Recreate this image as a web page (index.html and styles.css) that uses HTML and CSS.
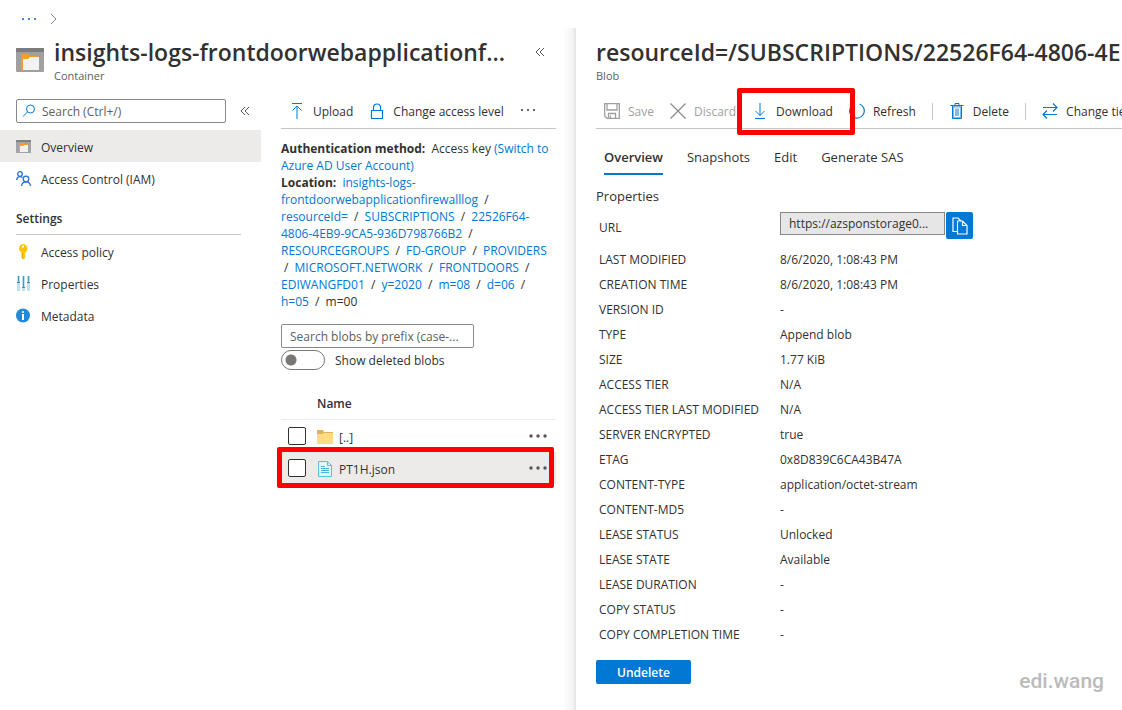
FILE: index.html
```html
<!DOCTYPE html>
<html lang="en">
<head>
  <meta charset="UTF-8" />
  <meta name="viewport" content="width=device-width, initial-scale=1" />
  <title>Storage container</title>
  <link rel="stylesheet" href="styles.css">
</head>
<body>

  <nav class="breadcrumb" aria-label="Breadcrumb">
    <button type="button" class="crumb-more" aria-label="More">
      <svg width="14" height="3" viewBox="0 0 14 3" fill="#3d8edb"><path d="M0 0h2v2H0zM6 0h2v2H6zM12 0h2v2h-2z"/></svg>
    </button>
    <svg width="8" height="12" viewBox="0 0 8 12" fill="none" stroke="#8a8886"><path d="M1 1l5 5-5 5"/></svg>
  </nav>

  <div class="blades">
    <section class="blade container-blade">
      <header class="blade-header">
        <svg class="blade-icon" viewBox="0 0 28 26">
          <rect y="1" width="28" height="24" rx="1" fill="#a0a0a0"/>
          <path d="M0 5V2q0-1 1-1h26q1 0 1 1v3z" fill="#7c7c7c"/>
          <path d="M5 8q0-1 1-1h6l2 2h7q1 0 1 1v13H6q-1 0-1-1z" fill="#ff9b2b"/>
          <path d="M7 23V12h5l2-2h9v13z" fill="#f2f2f2"/>
        </svg>
        <div class="blade-title">
          <h1>insights-logs-frontdoorwebapplicationf...</h1>
          <p>Container</p>
        </div>
        <button type="button" class="collapse" aria-label="Collapse">
          <svg width="10" height="10" viewBox="0 0 10 10" fill="none" stroke="#555"><path d="M5 1L1 5l4 4M9 1L5 5l4 4"/></svg>
        </button>
      </header>

      <div class="blade-body">
        <nav class="menu">
          <div class="menu-search">
            <div class="search-box">
              <svg width="14" height="14" viewBox="0 0 14 14" fill="none" stroke="#0078d4"><circle cx="8.5" cy="5" r="4"/><path d="M5.500 8L1 12.500"/></svg>
              <input type="text" aria-label="Search menu" placeholder="Search (Ctrl+/)">
            </div>
            <button type="button" class="collapse" aria-label="Collapse menu">
              <svg width="10" height="10" viewBox="0 0 10 10" fill="none" stroke="#555"><path d="M5 1L1 5l4 4M9 1L5 5l4 4"/></svg>
            </button>
          </div>
          <a href="#" class="menu-item active">
            <svg class="icon" viewBox="0 0 16 16">
              <rect y="1" width="15" height="13" fill="#a3a3a3"/>
              <path d="M0 1h15v2H0z" fill="#7f7f7f"/>
              <path d="M3 4h4l1 1h4v8H3z" fill="#ff9b2b"/>
              <path d="M4 13V7h3l1-1h4v7z" fill="#f1f1f1"/>
            </svg>
            Overview
          </a>
          <a href="#" class="menu-item">
            <svg class="icon" viewBox="0 0 16 16" fill="none" stroke="#2a6fd6" stroke-width="1.300">
              <circle cx="4" cy="3" r="2.300"/><path d="M.7 9c0-2 1.500-3.400 3.300-3.400 1 0 1.800.4 2.400 1"/>
              <circle cx="10" cy="8" r="2.800"/><path d="M5.600 15c.2-2.500 2-4.200 4.400-4.200s4.300 1.700 4.500 4.200"/>
            </svg>
            Access Control (IAM)
          </a>
          <h2 class="menu-group">Settings</h2>
          <a href="#" class="menu-item">
            <svg class="icon" viewBox="0 0 16 16">
              <path d="M7 0a4.500 4.500 0 0 1 2 8.500V14l-2 1.500L5.500 14V8.500A4.500 4.500 0 0 1 7 0z" fill="#ffc20a"/>
              <circle cx="7" cy="2.500" r="1.200" fill="#fff"/><path d="M6.500 9v5" stroke="#f0a30a"/>
            </svg>
            Access policy
          </a>
          <a href="#" class="menu-item">
            <svg class="icon" viewBox="0 0 16 16">
              <path d="M1 0h3v15H1zM6 0h3v15H6zM11 0h3v15h-3z" fill="#bfe0ee"/>
              <path d="M2 0h1v6H2zM7 0h1v11H7zM12 0h1v6h-1z" fill="#3d9cc4"/>
              <path d="M1 6h3v1H1zM6 11h3v1H6zM11 6h3v1h-3z" fill="#7a7a7a"/>
            </svg>
            Properties
          </a>
          <a href="#" class="menu-item">
            <svg class="icon" viewBox="0 0 16 16">
              <circle cx="7" cy="7.500" r="7" fill="#2389da"/>
              <circle cx="7" cy="4" r="1.100" fill="#fff"/><path d="M6 6h2v6H6z" fill="#fff"/>
            </svg>
            Metadata
          </a>
        </nav>

        <main class="content">
          <div class="toolbar">
            <button type="button" class="command">
              <svg class="icon" viewBox="0 0 16 16" fill="none" stroke="#0078d4"><path d="M3 .5h10M8 16V3M3.500 7.500L8 3l4.500 4.500"/></svg>
              Upload
            </button>
            <button type="button" class="command">
              <svg class="icon" viewBox="0 0 16 16" fill="none" stroke="#0078d4" stroke-width="1.200"><path d="M2.500 7.500h11v8h-11zM4.500 7V4.500a3.500 3.500 0 0 1 7 0V7"/></svg>
              Change access level
            </button>
            <button type="button" class="command" aria-label="More commands">
              <svg class="icon" viewBox="0 0 16 16" fill="#666"><path d="M1 6h2v2H1zM7 6h2v2H7zM13 6h2v2h-2z"/></svg>
            </button>
          </div>

          <div class="location">
            <b>Authentication method:</b>&nbsp; Access key <a href="#">(Switch to<br>Azure AD User Account)</a><br>
            <b>Location:</b>&nbsp; <a href="#">insights-logs-<br>frontdoorwebapplicationfirewalllog</a> <i>/</i><br>
            <a href="#">resourceId=</a> <i>/</i> <a href="#">SUBSCRIPTIONS</a> <i>/</i> <a href="#">22526F64-<br>4806-4EB9-9CA5-936D798766B2</a> <i>/</i><br>
            <a href="#">RESOURCEGROUPS</a> <i>/</i> <a href="#">FD-GROUP</a> <i>/</i> <a href="#">PROVIDERS</a><br>
            <i>/</i> <a href="#">MICROSOFT.NETWORK</a> <i>/</i> <a href="#">FRONTDOORS</a> <i>/</i><br>
            <a href="#">EDIWANGFD01</a> <i>/</i> <a href="#">y=2020</a> <i>/</i> <a href="#">m=08</a> <i>/</i> <a href="#">d=06</a> <i>/</i><br>
            <a href="#">h=05</a> <i>/</i> m=00
          </div>

          <input type="text" class="blob-search" aria-label="Search blobs" placeholder="Search blobs by prefix (case-...">
          <label class="toggle"><input type="checkbox" role="switch">Show deleted blobs</label>

          <table class="blobs">
            <thead>
              <tr><th></th><th>Name</th><th></th></tr>
            </thead>
            <tbody>
              <tr>
                <td class="check"><input type="checkbox" aria-label="Select parent folder"></td>
                <td>
                  <div class="blob-name">
                    <svg class="icon" viewBox="0 0 16 16"><path d="M0 1h6l1 2h9v12H0z" fill="#ffdc82"/><path d="M0 1h6l1 2h9v1H7L6 5H0z" fill="#d9b65c"/></svg>
                    [..]
                  </div>
                </td>
                <td class="more"><button type="button" aria-label="More"><svg width="18" height="4" viewBox="0 0 18 4" fill="#555"><circle cx="2" cy="2" r="1.700"/><circle cx="9" cy="2" r="1.700"/><circle cx="16" cy="2" r="1.700"/></svg></button></td>
              </tr>
              <tr class="selected">
                <td class="check"><input type="checkbox" aria-label="Select PT1H.json"></td>
                <td>
                  <div class="blob-name">
                    <svg class="icon" viewBox="0 0 16 16"><path d="M1.500.5h9l4 4v11h-13z" fill="#e3f5fb" stroke="#5fbfdf"/><path d="M10.500.5v4h4" fill="none" stroke="#5fbfdf"/><path d="M4 5.500h4M4 7.500h8M4 9.500h8M4 11.500h8" stroke="#4fb3d6"/></svg>
                    PT1H.json
                  </div>
                </td>
                <td class="more"><button type="button" aria-label="More"><svg width="18" height="4" viewBox="0 0 18 4" fill="#555"><circle cx="2" cy="2" r="1.700"/><circle cx="9" cy="2" r="1.700"/><circle cx="16" cy="2" r="1.700"/></svg></button></td>
              </tr>
            </tbody>
          </table>
        </main>
      </div>
    </section>

    <section class="blade blob-blade">
      <header class="blade-header">
        <div class="blade-title">
          <h1>resourceId=/SUBSCRIPTIONS/22526F64-4806-4EB9-9CA5-936D798766B2</h1>
          <p>Blob</p>
        </div>
      </header>

      <div class="toolbar">
        <button type="button" class="command" disabled>
          <svg class="icon" viewBox="0 0 16 16" fill="none" stroke="#a19f9d" stroke-width="1.300"><path d="M.7.7h14.600v14.600H3L.7 13zM3 1v6h10V1M4.500 15v-4.500h7V15M6.500 12.500v2.500"/></svg>
          Save
        </button>
        <button type="button" class="command" disabled>
          <svg class="icon" viewBox="0 0 16 16" fill="none" stroke="#8a8886" stroke-width="1.200"><path d="M.5.5l15 15M15.500.5l-15 15"/></svg>
          Discard
        </button>
        <button type="button" class="command marked">
          <svg class="icon" viewBox="0 0 16 16" fill="none" stroke="#0078d4"><path d="M3 15.500h10M8 0v12.500M3.500 8L8 12.500 12.500 8"/></svg>
          Download
        </button>
        <button type="button" class="command">
          <svg class="icon" viewBox="0 0 16 16" fill="none" stroke="#0078d4" stroke-width="1.200"><path d="M10.500 1A7.300 7.300 0 1 1 4 1.700M1 1h4v4"/></svg>
          Refresh
        </button>
        <span class="divider"></span>
        <button type="button" class="command">
          <svg class="icon" viewBox="0 0 16 16" fill="none" stroke="#0078d4"><path d="M3.500 3v12.500h9V3" fill="#83bbe8"/><path d="M1.500 2.500h13M6 2V.5h4V2"/><path d="M5.500 5v8.500h5V5z" stroke="#fff"/></svg>
          Delete
        </button>
        <span class="divider"></span>
        <button type="button" class="command">
          <svg class="icon" viewBox="0 0 16 16" fill="none" stroke="#0078d4" stroke-width="1.200"><path d="M1 4.500h14M11 .5l4 4-4 4M15 11.500H1M5 7.500l-4 4 4 4"/></svg>
          Change tier
        </button>
      </div>

      <nav class="tabs">
        <a href="#" class="active">Overview</a>
        <a href="#">Snapshots</a>
        <a href="#">Edit</a>
        <a href="#">Generate SAS</a>
      </nav>

      <h2 class="section-title">Properties</h2>
      <table class="properties">
        <tbody>
          <tr class="url-row">
            <th><label for="url">URL</label></th>
            <td>
              <div class="url">
                <input type="text" id="url" readonly value="https://azsponstorage0...">
                <button type="button" aria-label="Copy URL">
                  <svg width="16" height="18" viewBox="0 0 16 18" fill="none" stroke="#fff" stroke-width="1.200"><path d="M5 14.500H1V1h5l3 3"/><path d="M5.500 4h5l4.500 4.500V17H5.500zM10.500 4v4.500H15"/></svg>
                </button>
              </div>
            </td>
          </tr>
          <tr><th>LAST MODIFIED</th><td>8/6/2020, 1:08:43 PM</td></tr>
          <tr><th>CREATION TIME</th><td>8/6/2020, 1:08:43 PM</td></tr>
          <tr><th>VERSION ID</th><td>-</td></tr>
          <tr><th>TYPE</th><td>Append blob</td></tr>
          <tr><th>SIZE</th><td>1.77 KiB</td></tr>
          <tr><th>ACCESS TIER</th><td>N/A</td></tr>
          <tr><th>ACCESS TIER LAST MODIFIED</th><td>N/A</td></tr>
          <tr><th>SERVER ENCRYPTED</th><td>true</td></tr>
          <tr><th>ETAG</th><td>0x8D839C6CA43B47A</td></tr>
          <tr><th>CONTENT-TYPE</th><td>application/octet-stream</td></tr>
          <tr><th>CONTENT-MD5</th><td>-</td></tr>
          <tr><th>LEASE STATUS</th><td>Unlocked</td></tr>
          <tr><th>LEASE STATE</th><td>Available</td></tr>
          <tr><th>LEASE DURATION</th><td>-</td></tr>
          <tr><th>COPY STATUS</th><td>-</td></tr>
          <tr><th>COPY COMPLETION TIME</th><td>-</td></tr>
        </tbody>
      </table>

      <button type="button" class="primary">Undelete</button>
      <span class="watermark">edi.wang</span>
    </section>
  </div>

</body>
</html>
```
FILE: styles.css
```css
* {
  box-sizing: border-box;
}
body {
  margin: 0;
  min-height: 100vh;
  display: flex;
  flex-direction: column;
  background-color: #fff;
  color: #323130;
  font-family: "Open Sans", "Segoe UI", sans-serif;
  font-size: 12px;
  line-height: 17px;
}
h1, h2, p {
  margin: 0;
}
a {
  color: #0078d4;
  text-decoration: none;
}
button, input {
  font: inherit;
  color: inherit;
}
button {
  padding: 0;
  border: none;
  background: none;
  cursor: pointer;
}
svg {
  display: block;
}
.icon {
  flex: none;
  width: 16px;
  height: 16px;
}

.breadcrumb {
  display: flex;
  align-items: center;
  gap: 14px;
  height: 28px;
  padding: 10px 22px 0;
}

/* blades */
.blades {
  display: flex;
  flex: 1;
  overflow: hidden;
}
.container-blade {
  flex: 0 0 576px;
  background: linear-gradient(to left, #e4e4e4, #f5f5f5 4px, #fff 14px);
}
.blob-blade {
  position: relative;
  flex: 1;
  min-width: 0;
  padding-left: 20px;
  overflow: hidden;
}
.blade-header {
  display: flex;
  height: 65px;
}
.blade-icon {
  flex: none;
  width: 28px;
  height: 26px;
  margin: 19px 10px 0 16px;
}
.blade-title {
  flex: 1;
  min-width: 0;
  padding-top: 8px;
}
.blade-title h1 {
  font-size: 23px;
  font-weight: 600;
  line-height: 32px;
  white-space: nowrap;
}
.blade-title p {
  color: #605e5c;
  font-size: 11px;
  line-height: 16px;
}
.container-blade .blade-header .collapse {
  height: 10px;
  margin: 19px 31px 0 0;
}
.blade-body {
  display: flex;
}

/* left menu */
.menu {
  flex: 0 0 261px;
}
.menu-search {
  display: flex;
  align-items: center;
  gap: 14px;
  padding: 6px 0 7px 16px;
}
.search-box {
  display: flex;
  align-items: center;
  gap: 6px;
  width: 210px;
  height: 24px;
  padding-left: 5px;
  border: 1px solid #8a8886;
  border-radius: 2px;
  background-color: #fff;
}
.search-box input {
  flex: 1;
  min-width: 0;
  padding: 0;
  border: none;
  outline: none;
}
input::placeholder {
  color: #605e5c;
  opacity: 1;
}
.menu-item {
  display: flex;
  align-items: center;
  gap: 9px;
  height: 32px;
  padding: 2px 16px 0;
  color: #323130;
}
.menu-item.active {
  background-color: #edebe9;
}
.menu-group {
  margin: 0 20px 0 16px;
  padding: 16px 0 7px;
  border-bottom: 1px solid #c8c6c4;
  font-size: 12px;
  font-weight: 600;
}

/* toolbars */
.toolbar {
  display: flex;
  align-items: center;
  gap: 16px;
  height: 36px;
  padding: 1px 0 0 8px;
  border-bottom: 1px solid #c8c6c4;
}
.command {
  display: flex;
  flex: none;
  align-items: center;
  gap: 8px;
  white-space: nowrap;
}
.command:disabled {
  color: #a19f9d;
}
.divider {
  flex: none;
  width: 1px;
  height: 17px;
  background-color: #c8c6c4;
}

/* red boxes round the marked command and row */
.marked, .selected {
  position: relative;
}
.marked::after, .selected::after {
  content: "";
  position: absolute;
  z-index: 1;
  border: 5px solid #f00;
  border-radius: 2px;
  pointer-events: none;
}
.marked::after {
  inset: -15px -22px -15px -15px;
}
.selected::after {
  inset: -5px 2px -4px -4px;
}

/* container content */
.content {
  flex: 1;
  min-width: 0;
  padding: 0 20px;
}
.location {
  padding: 11px 0 14px;
  white-space: nowrap;
}
.location i {
  margin: 0 3px;
  font-style: normal;
}
.blob-search {
  display: block;
  width: 193px;
  height: 24px;
  padding: 0 8px;
  border: 1px solid #8a8886;
  border-radius: 2px;
}
.toggle {
  display: flex;
  align-items: center;
  gap: 10px;
  margin-top: 2px;
}
.toggle input {
  appearance: none;
  width: 44px;
  height: 20px;
  margin: 0;
  border: 1px solid #7a7877;
  border-radius: 10px;
  background: radial-gradient(circle at 9px 9px, #7a7877 5px, transparent 6px);
}
.blobs {
  width: 100%;
  margin-top: 17px;
  border-collapse: separate;
  border-spacing: 0;
}
.blobs th {
  height: 33px;
  padding: 0;
  border-bottom: 1px solid #edebe9;
  font-weight: 600;
  text-align: left;
}
.blobs td {
  height: 32px;
  padding: 0;
}
.blobs .selected td {
  background-color: #edebe9;
}
.check {
  width: 36px;
}
.check input {
  appearance: none;
  display: block;
  width: 18px;
  height: 18px;
  margin: 0 0 0 7px;
  border: 1px solid #323130;
  border-radius: 2px;
  background-color: #fff;
}
.blob-name {
  display: flex;
  align-items: center;
  gap: 6px;
  padding-top: 2px;
}
.more {
  width: 27px;
}
.more button {
  display: block;
}

/* blob details */
.tabs {
  display: flex;
  gap: 24px;
  padding: 20px 8px 0;
  font-size: 13px;
}
.tabs a {
  height: 26px;
  color: #323130;
}
.tabs .active {
  border-bottom: 2px solid #0078d4;
  font-weight: 600;
}
.section-title {
  padding: 13px 0 5px;
  font-size: 13px;
  font-weight: 400;
}
.properties {
  border-collapse: collapse;
}
.properties th, .properties td {
  height: 25px;
  padding: 0 0 0 3px;
  font-weight: 400;
  text-align: left;
}
.properties th {
  width: 181px;
}
.properties .url-row td, .properties .url-row th {
  height: 37px;
  vertical-align: top;
}
.url-row th label {
  display: block;
  padding-top: 9px;
}
.url {
  display: flex;
  align-items: flex-start;
  gap: 1px;
  padding-top: 2px;
}
.url input {
  width: 165px;
  height: 23px;
  padding: 0 8px;
  border: 1px solid #8a8886;
  background-color: #e6e6e6;
}
.url button {
  display: flex;
  align-items: center;
  justify-content: center;
  width: 27px;
  height: 27px;
  border-radius: 2px;
  background-color: #0078d4;
}
.primary {
  width: 95px;
  height: 24px;
  margin-top: 13px;
  border-radius: 2px;
  background-color: #0078d4;
  color: #fff;
  font-weight: 600;
}
.watermark {
  position: absolute;
  right: 18px;
  bottom: 17px;
  color: #bbb;
  font-family: Roboto, sans-serif;
  font-size: 21px;
  font-weight: 500;
  line-height: 24px;
}
```
